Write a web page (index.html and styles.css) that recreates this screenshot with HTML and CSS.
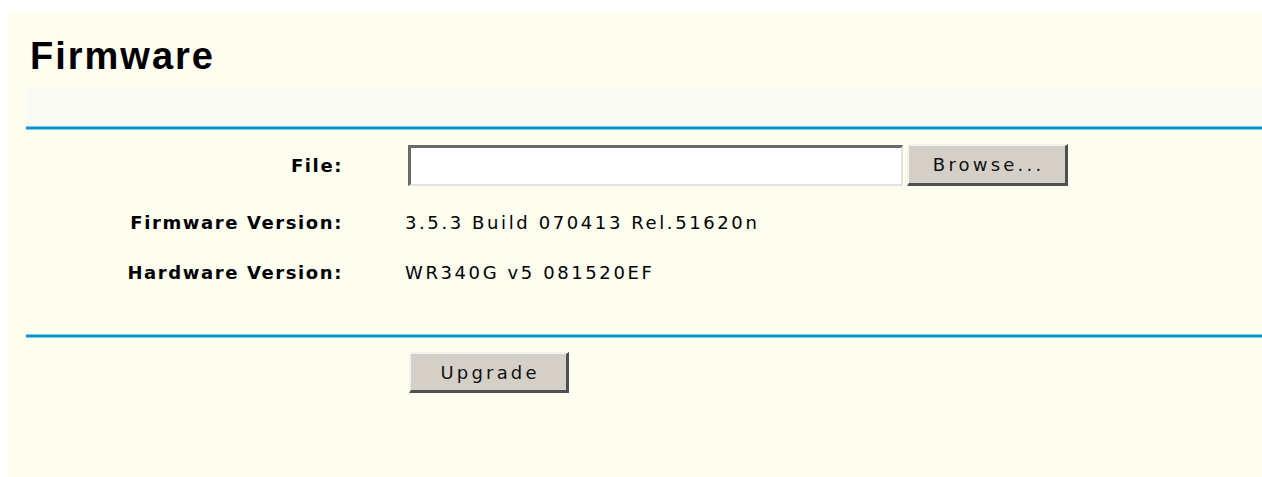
FILE: index.html
```html
<!DOCTYPE html>
<html lang="en">
<head>
<meta charset="utf-8">
<title>Firmware</title>
<link rel="stylesheet" href="styles.css">
</head>
<body>
<div class="panel">
  <div class="title-row">
    <h1 class="title">Firmware</h1>
  </div>
  <div class="inner">
    <div class="spacer"></div>
    <div class="rule"></div>
    <form class="fields">
      <div class="row row-file">
        <label class="label" for="file">File:</label>
        <div class="value file-pick">
          <input class="file-input" id="file" type="text">
          <button class="btn btn-browse" type="button">Browse...</button>
        </div>
      </div>
      <div class="row row-info">
        <span class="label">Firmware Version:</span>
        <span class="value text">3.5.3 Build 070413 Rel.51620n</span>
      </div>
      <div class="row">
        <span class="label">Hardware Version:</span>
        <span class="value text">WR340G v5 081520EF</span>
      </div>
    </form>
    <div class="rule"></div>
    <div class="actions">
      <button class="btn btn-upgrade" type="button">Upgrade</button>
    </div>
  </div>
</div>
</body>
</html>
```
FILE: styles.css
```css
html {
  overflow: hidden;
}

html, body {
  margin: 0;
  background: #ffffff;
}

body {
  padding: 12px 0 0 8px;
  font-family: "DejaVu Sans", Verdana, sans-serif;
  color: #000;
}

/* the page panel runs on past the right and bottom edges of the window */
.panel {
  background: #fdfdf0;
  min-height: 480px;
  margin-right: -40px;
}

.title-row {
  height: 76px;
  box-sizing: border-box;
  padding: 22px 0 0 22px;
}

.title {
  margin: 0;
  font-family: "Liberation Sans", Arial, sans-serif;
  font-size: 38px;
  line-height: 44px;
  font-weight: bold;
  letter-spacing: 2px;
}

.inner {
  margin-left: 18px;
}

.spacer {
  height: 38px;
  background: #fafbf3;
}

.rule {
  height: 2px;
  background: #0a93ce;
  border-top: 1px solid #80c8e6;
  border-bottom: 1px solid #80c8e6;
}

.fields {
  padding: 10px 0 37px;
}

.row {
  display: grid;
  grid-template-columns: 317px 1fr;
  column-gap: 62px;
  align-items: center;
  height: 50px;
}

.row-info {
  margin-top: 7px;
}

.label {
  text-align: right;
  font-weight: bold;
  font-size: 18px;
  letter-spacing: 1.6px;
}

.text {
  font-size: 18px;
  letter-spacing: 2.6px;
}

.file-pick {
  display: flex;
  align-items: center;
  gap: 4px;
  padding-left: 3px;
}

.file-input {
  box-sizing: border-box;
  width: 495px;
  height: 41px;
  margin: 0;
  background: #ffffff;
  border-style: solid;
  border-width: 3px 2px 2px 3px;
  border-color: #6a6a6a #e4e2dc #e4e2dc #6a6a6a;
  outline: none;
}

.btn {
  box-sizing: border-box;
  height: 42px;
  margin: 0;
  padding: 0;
  background: #d4d0c8;
  border-style: solid;
  border-width: 2px 3px 3px 2px;
  border-color: #f4f3ee #505050 #505050 #f4f3ee;
  font-family: "DejaVu Sans", Verdana, sans-serif;
  font-size: 18px;
  letter-spacing: 3.2px;
  text-indent: 3.2px;
  color: #111;
}

.btn-browse {
  width: 161px;
}

.actions {
  padding: 14px 0 0 383px;
}

.btn-upgrade {
  width: 160px;
  height: 41px;
}
```
